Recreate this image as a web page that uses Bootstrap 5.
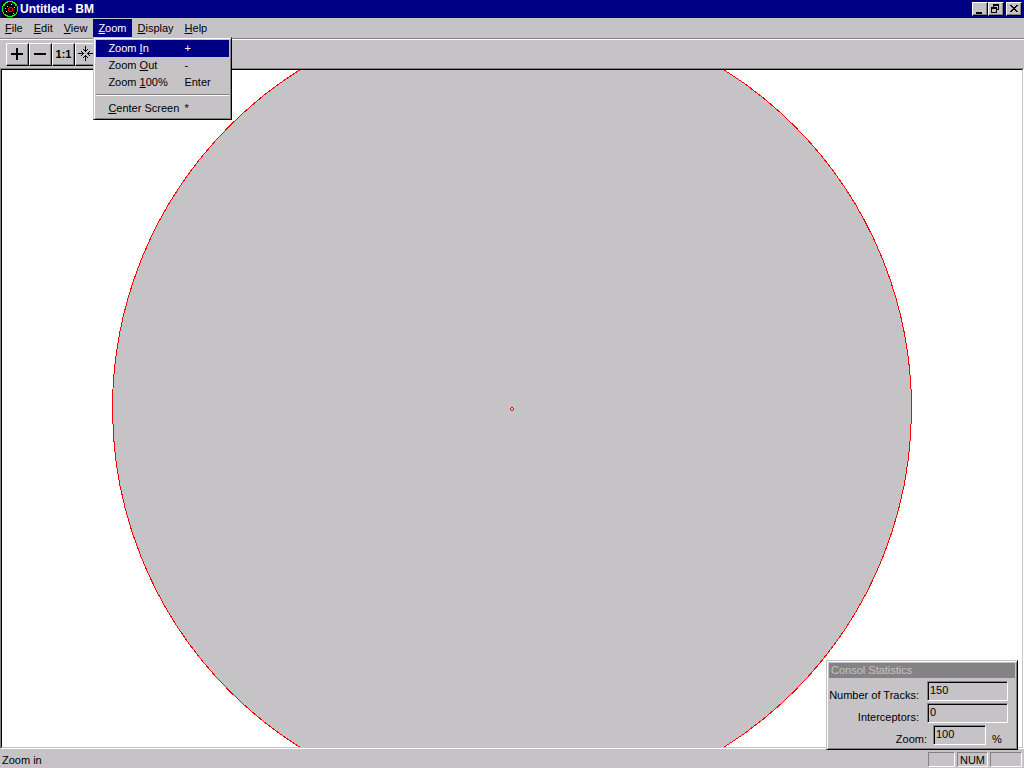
<!DOCTYPE html>
<html lang="en">
<head>
<meta charset="utf-8">
<meta name="viewport" content="width=device-width, initial-scale=1">
<title>Untitled - BM</title>
<link href="https://cdn.jsdelivr.net/npm/bootstrap@5.3.0/dist/css/bootstrap.min.css" rel="stylesheet">
<style>
:root { --face:#c6c3c6; --shade:#848284; --navy:#000084; }
body { font:11px/13px "Liberation Sans", Arial, sans-serif; color:#000; background:var(--face); }
u { text-underline-offset:1px; }
button { font:inherit; color:inherit; }
.titlebar { height:18px; background:var(--navy); color:#fff; padding:0 2px; }
.titlebar h1 { font-size:12px; line-height:18px; font-weight:700; margin-left:2px; }
.raised { background:var(--face); border:1px solid; border-color:#fff #000 #000 #fff; box-shadow:inset -1px -1px var(--shade); }
.win-btn { width:16px; height:14px; }
.close-btn { margin-left:2px; }
.menubar { height:20px; padding:1px 0; gap:1px; }
.menubar .menu-btn { height:18px; padding:0 5px; border:0; border-radius:0; background:transparent; display:block; }
.menubar .menu-btn.show { background:var(--navy); color:#fff; }
.zoom-menu { --bs-dropdown-min-width:139px; --bs-dropdown-font-size:11px; --bs-dropdown-border-radius:0; --bs-dropdown-bg:var(--face);
  --bs-dropdown-link-color:#000; --bs-dropdown-link-active-bg:var(--navy); --bs-dropdown-link-hover-bg:var(--navy); --bs-dropdown-link-hover-color:#fff;
  --bs-dropdown-item-padding-x:12px; --bs-dropdown-item-padding-y:2px;
  top:100%; left:0; padding:2px 1px; border:1px solid; border-color:var(--face) #000 #000 var(--face); box-shadow:inset 1px 1px #fff, inset -1px -1px var(--shade); }
.zoom-menu .dropdown-item { display:grid; grid-template-columns:76px 1fr; width:auto; margin:0 1px; }
.zoom-menu .dropdown-divider { margin:3px 1px 4px; height:2px; border:0; background:linear-gradient(var(--shade) 50%, #fff 50%); opacity:1; }
.toolbar { height:30px; padding:3px 6px; border-top:1px solid var(--shade); box-shadow:inset 0 1px #fff; }
.tool-btn { width:23px; height:23px; margin-top:1px; font-weight:700; }
.workspace { border:1px solid; border-color:var(--shade) #fff #fff var(--shade); min-height:0; }
.scope { background:#fff; border:1px solid; border-color:#000 var(--face) var(--face) #000; }
.stats { right:5px; bottom:-2px; width:192px; padding:2px; background:var(--face); border:1px solid; border-color:var(--face) #000 #000 var(--face); box-shadow:inset 1px 1px #fff, inset -1px -1px var(--shade); }
.stats h2 { font-size:11px; line-height:15px; margin-bottom:3px; background:var(--shade); color:var(--face); padding:0 2px; }
.stat-row { display:grid; grid-template-columns:1fr 81px; column-gap:8px; height:22px; padding-right:7px; }
.stat-row label { text-align:right; padding-top:8px; white-space:nowrap; }
.field { height:20px; min-width:0; padding:0 2px 2px; font:inherit; line-height:16px; color:#000; background:var(--face); border:1px solid; border-color:var(--shade) #fff #fff var(--shade); box-shadow:inset 1px 1px #000; border-radius:0; }
.zoom-row { grid-template-columns:1fr 53px 16px; column-gap:6px; }
.statusbar { height:19px; padding:3px 2px 1px; line-height:16px; }
.panes { gap:2px; }
.pane { height:15px; border:1px solid; border-color:var(--shade) #fff #fff var(--shade); text-align:center; line-height:14px; }
.pane-s { width:27px; } .pane-m { width:31px; } .pane-l { width:32px; }
</style>
</head>
<body class="d-flex flex-column vh-100 overflow-hidden">
<header class="titlebar d-flex align-items-center">
  <svg width="16" height="16" viewBox="0 0 16 16" shape-rendering="crispEdges" aria-hidden="true">
    <path d="M0 0h16v16H0z"/>
    <path d="M5 0h6v1H5zM3 1h3v1H3zM10 1h3v1h-3zM2 2h2v1H2zM12 2h2v1h-2zM1 3h2v2H1zM13 3h2v2h-2zM0 5h1v6H0zM15 5h1v6h-1zM1 11h1v2H1zM14 11h1v2h-1zM2 13h2v1H2zM12 13h2v1h-2zM3 14h3v1H3zM10 14h3v1h-3zM5 15h6v1H5z" fill="#0f0"/>
    <path d="M7 6h3v1H7zM7 10h3v1H7zM6 7h1v3H6zM10 7h1v3h-1z" fill="#f00"/>
    <path d="M5 5h1v1H5zM3 7h1v1H3z" fill="#0ff"/><path d="M9 3h1v1H9zM12 6h1v1h-1zM4 10h1v1H4zM11 12h1v1h-1z" fill="#ff0"/>
  </svg>
  <h1 class="mb-0 me-auto">Untitled - BM</h1>
  <button class="raised win-btn p-0 d-flex" aria-label="Minimize"><svg width="14" height="12" shape-rendering="crispEdges"><path d="M3 9h6v2H3z"/></svg></button>
  <button class="raised win-btn p-0 d-flex" aria-label="Restore"><svg width="14" height="12" shape-rendering="crispEdges"><path d="M4 1h6v2H4zM4 3h1v1H4zM9 3h1v4H9zM8 6h1v1H8zM2 4h6v2H2zM2 6h1v4H2zM7 6h1v4H7zM2 9h6v1H2z"/></svg></button>
  <button class="raised win-btn close-btn p-0 d-flex" aria-label="Close"><svg width="14" height="12" shape-rendering="crispEdges"><path d="M3 2h2v1h1v1h2V3h1V2h2v1h-1v1H9v1H8v1h1v1h1v1h1v1H9V8H8V7H6v1H5v1H3V8h1V7h1V6h1V5H5V4H4V3H3z"/></svg></button>
</header>

<nav class="menubar d-flex" aria-label="Menu">
  <button class="menu-btn"><u>F</u>ile</button>
  <button class="menu-btn"><u>E</u>dit</button>
  <button class="menu-btn"><u>V</u>iew</button>
  <div class="dropdown">
    <button class="menu-btn show" data-bs-toggle="dropdown" data-bs-display="static" aria-expanded="true"><u>Z</u>oom</button>
    <ul class="dropdown-menu zoom-menu show">
      <li><a class="dropdown-item active" href="#"><span>Zoom <u>I</u>n</span><span>+</span></a></li>
      <li><a class="dropdown-item" href="#"><span>Zoom <u>O</u>ut</span><span>-</span></a></li>
      <li><a class="dropdown-item" href="#"><span>Zoom <u>1</u>00%</span><span>Enter</span></a></li>
      <li><hr class="dropdown-divider"></li>
      <li><a class="dropdown-item" href="#"><span><u>C</u>enter Screen</span><span>*</span></a></li>
    </ul>
  </div>
  <button class="menu-btn"><u>D</u>isplay</button>
  <button class="menu-btn"><u>H</u>elp</button>
</nav>

<div class="toolbar d-flex" role="toolbar" aria-label="Zoom">
  <button class="raised tool-btn p-0" aria-label="Zoom in"><svg class="d-block" width="21" height="21" shape-rendering="crispEdges"><path d="M4 9h12v2H4zM9 4h2v12H9z"/></svg></button>
  <button class="raised tool-btn p-0" aria-label="Zoom out"><svg class="d-block" width="21" height="21" shape-rendering="crispEdges"><path d="M4 9h12v2H4z"/></svg></button>
  <button class="raised tool-btn p-0">1:1</button>
  <button class="raised tool-btn p-0" aria-label="Center screen"><svg class="d-block" width="21" height="21" shape-rendering="crispEdges"><path d="M9 2h1v6H9zM9 11h1v6H9zM2 9h6v1H2zM11 9h6v1h-6zM7 5h1v1H7zM8 6h3v1H8zM11 5h1v1h-1zM8 12h3v1H8zM7 13h1v1H7zM11 13h1v1h-1zM6 8h1v3H6zM5 7h1v1H5zM5 11h1v1H5zM12 8h1v3h-1zM13 7h1v1h-1zM13 11h1v1h-1z"/></svg></button>
</div>

<main class="workspace flex-grow-1 d-flex position-relative">
  <div class="scope flex-grow-1">
    <svg class="d-block" width="100%" height="100%" role="img" aria-label="Scope">
      <svg x="50%" y="50%" overflow="visible">
        <circle r="399.5" fill="#c6c3c6" stroke="#f00" shape-rendering="crispEdges"/>
        <path d="M-1 -1.500h2M-1 1.500h2M-1.500 -1v2M1.500 -1v2" stroke="#f00" shape-rendering="crispEdges"/>
      </svg>
    </svg>
  </div>
  <section class="stats position-absolute">
    <h2>Consol Statistics</h2>
    <div class="stat-row"><label for="tracks">Number of Tracks:</label><input class="field" id="tracks" value="150"></div>
    <div class="stat-row"><label for="inter">Interceptors:</label><input class="field" id="inter" value="0"></div>
    <div class="stat-row zoom-row"><label for="zoom">Zoom:</label><input class="field" id="zoom" value="100"><span class="pt-2">%</span></div>
  </section>
</main>

<footer class="statusbar d-flex">
  <span class="me-auto">Zoom in</span>
  <div class="panes d-flex">
    <span class="pane pane-s"></span><span class="pane pane-m">NUM</span><span class="pane pane-l"></span>
  </div>
</footer>
<script src="https://cdn.jsdelivr.net/npm/bootstrap@5.3.0/dist/js/bootstrap.bundle.min.js"></script>
</body>
</html>
